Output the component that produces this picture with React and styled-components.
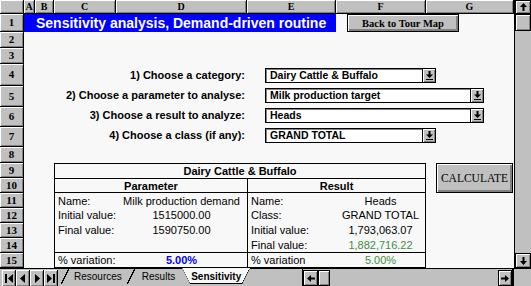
import React from 'react'
import styled, { createGlobalStyle } from 'styled-components'

const GlobalStyle = createGlobalStyle`
  html, body {
    margin: 0;
    padding: 0;
    background: #c0c0c0;
  }
  body {
    width: 531px;
    height: 286px;
    overflow: hidden;
    font-family: "Liberation Sans", Arial, sans-serif;
  }
  * { box-sizing: border-box; }
`

const COLS = [24, 11, 19, 62, 131, 89, 90, 88]
const ROWS = [14, 18, 16, 16, 22, 21, 20, 20, 16, 15, 15, 15, 15, 15, 15, 15]
const LETTERS = ['A', 'B', 'C', 'D', 'E', 'F', 'G']

const GRAY = '#c0c0c0'
const SHEET = '#f8f8f8'
const GREEN = '#3f8f3f'

const Window = styled.div`
  width: 531px;
  height: 286px;
  display: flex;
  flex-direction: column;
  background: ${GRAY};
`

const Top = styled.div`
  display: flex;
  height: 268px;
`

const Sheet = styled.div`
  width: 514px;
  display: grid;
  grid-template-columns: ${COLS.map(c => c + 'px').join(' ')};
  grid-template-rows: ${ROWS.map(r => r + 'px').join(' ')};
  background: ${SHEET};
`

const HeaderCell = styled.div`
  grid-column: ${p => p.$col};
  grid-row: ${p => p.$row};
  background: ${GRAY};
  border-right: 1px solid #000;
  border-bottom: 1px solid #000;
  box-shadow: inset 1px 1px 0 #fff, inset -1px -1px 0 #808080;
  display: flex;
  align-items: center;
  justify-content: center;
  font-family: "Liberation Serif", "Times New Roman", serif;
  font-weight: bold;
  font-size: ${p => (p.$small ? '10px' : '11px')};
  color: #000;
  line-height: 1;
`

const Title = styled.div`
  grid-column: 2 / 7;
  grid-row: 2;
  background: #0000ff;
  color: #fff;
  font-weight: bold;
  font-size: 14px;
  display: flex;
  align-items: center;
  padding-left: 12px;
  white-space: nowrap;
`

const RaisedButton = styled.div`
  grid-column: ${p => p.$col};
  grid-row: ${p => p.$row};
  align-self: start;
  justify-self: start;
  margin-left: ${p => p.$left}px;
  width: ${p => p.$w}px;
  height: ${p => p.$h}px;
  background: ${GRAY};
  border: 1px solid #000;
  box-shadow: inset 1px 1px 0 #fff, inset -2px -2px 0 #808080;
  display: flex;
  align-items: center;
  justify-content: center;
  font-family: "Liberation Serif", "Times New Roman", serif;
  font-weight: ${p => (p.$bold ? 'bold' : 'normal')};
  font-size: ${p => p.$size}px;
  color: #000;
  white-space: nowrap;
`

const Form = styled.div`
  grid-column: 2 / 9;
  grid-row: 5 / 9;
  display: grid;
  grid-template-columns: 221px 1fr;
  column-gap: 20px;
  row-gap: 5px;
  grid-auto-rows: 15px;
  align-content: start;
  padding-top: 4px;
`

const Label = styled.div`
  text-align: right;
  font-weight: bold;
  font-size: 11px;
  line-height: 15px;
  white-space: nowrap;
  color: #000;
`

const Select = styled.div`
  width: ${p => p.$w}px;
  height: 15px;
  display: flex;
  border: 1px solid #000;
  background: #fff;
`

const SelectValue = styled.div`
  flex: 1;
  padding-left: 4px;
  font-weight: bold;
  font-size: 10.5px;
  line-height: 13px;
  box-shadow: inset 1px 1px 0 #808080;
  white-space: nowrap;
  overflow: hidden;
`

const SelectButton = styled.div`
  width: 13px;
  border-left: 1px solid #000;
  background: ${GRAY};
  box-shadow: inset 1px 1px 0 #fff, inset -1px -1px 0 #808080;
  display: flex;
  align-items: center;
  justify-content: center;
`

const Table = styled.div`
  grid-column: 4 / 8;
  grid-row: 10 / 17;
  border: 1px solid #000;
  display: grid;
  grid-template-columns: 61px 131px 89px 89px;
  grid-template-rows: repeat(7, 1fr);
`

const TCell = styled.div`
  grid-column: span ${p => p.$span || 1};
  display: flex;
  align-items: center;
  justify-content: ${p => (p.$center ? 'center' : 'flex-start')};
  padding-left: ${p => (p.$center ? 0 : p.$pad || 3)}px;
  font-size: 11px;
  font-weight: ${p => (p.$bold ? 'bold' : 'normal')};
  color: ${p => p.$color || '#000'};
  white-space: nowrap;
  border-bottom: ${p => (p.$under ? '1px solid #000' : 'none')};
  border-top: ${p => (p.$over ? '1px solid #000' : 'none')};
  border-left: ${p => (p.$divider ? '1px solid #000' : 'none')};
`

const VScroll = styled.div`
  width: 17px;
  display: flex;
  flex-direction: column;
  border-left: 1px solid #000;
  background: ${GRAY};
`

const ScrollBtn = styled.div`
  width: ${p => p.$w || 'auto'};
  height: ${p => p.$h || 'auto'};
  flex: none;
  background: ${GRAY};
  border: 1px solid #000;
  box-shadow: inset 1px 1px 0 #fff, inset -1px -1px 0 #808080;
  display: flex;
  align-items: center;
  justify-content: center;
`

const Track = styled.div`
  flex: 1;
  background: ${GRAY};
`

const BottomBar = styled.div`
  height: 18px;
  display: flex;
  border-top: 1px solid #000;
  background: ${GRAY};
`

const NavGroup = styled.div`
  width: 58px;
  display: flex;
  padding: 1px 0 0 2px;
`

const NavBtn = styled(ScrollBtn)`
  width: 14px;
  height: 16px;
  border-width: 0 1px 0 0;
`

const TabStrip = styled.div`
  width: 244px;
  display: flex;
  align-items: flex-start;
  padding-left: 3px;
`

const Slant = styled.div`
  width: 8px;
  height: 15px;
  flex: none;
  background: linear-gradient(
    ${p => (p.$back ? 'to top right' : 'to bottom right')},
    transparent calc(50% - 0.7px),
    #000 calc(50% - 0.7px),
    #000 calc(50% + 0.7px),
    transparent calc(50% + 0.7px)
  );
`

const TabText = styled.div`
  height: 15px;
  padding: 0 ${p => p.$pad}px;
  font-size: 10px;
  font-weight: ${p => (p.$active ? 'bold' : 'normal')};
  line-height: 15px;
  color: #000;
  white-space: nowrap;
`

const ActiveTab = styled.div`
  display: flex;
  margin-top: -1px;
  height: 16px;
  padding-top: 1px;
  background:
    linear-gradient(#000, #000) bottom / 100% 1px no-repeat,
    ${SHEET};
  clip-path: polygon(0 0, 100% 0, calc(100% - 8px) 100%, 8px 100%);
`

const HScroll = styled.div`
  width: 212px;
  display: flex;
  border-left: 1px solid #000;
  border-right: 2px solid #000;
  padding-top: 1px;
`

const Corner = styled.div`
  flex: 1;
`

const ArrowUp = () => (
  <svg width="7" height="8" viewBox="0 0 7 8">
    <path d="M3.5 0 L7 4 L4.5 4 L4.5 8 L2.5 8 L2.5 4 L0 4 Z" fill="#000" />
  </svg>
)

const ArrowDown = () => (
  <svg width="7" height="8" viewBox="0 0 7 8">
    <path d="M3.5 8 L7 4 L4.5 4 L4.5 0 L2.5 0 L2.5 4 L0 4 Z" fill="#000" />
  </svg>
)

const ArrowLeft = () => (
  <svg width="8" height="7" viewBox="0 0 8 7">
    <path d="M0 3.5 L4 0 L4 2.5 L8 2.5 L8 4.5 L4 4.5 L4 7 Z" fill="#000" />
  </svg>
)

const ArrowRight = () => (
  <svg width="8" height="7" viewBox="0 0 8 7">
    <path d="M8 3.5 L4 0 L4 2.5 L0 2.5 L0 4.5 L4 4.5 L4 7 Z" fill="#000" />
  </svg>
)

const DropArrow = () => (
  <svg width="7" height="9" viewBox="0 0 7 9">
    <path d="M3.5 7 L7 3.5 L4.5 3.5 L4.5 0 L2.5 0 L2.5 3.5 L0 3.5 Z" fill="#000" />
    <rect x="0" y="8" width="7" height="1" fill="#000" />
  </svg>
)

const NavIcon = ({ dir, bar }) => (
  <svg width="8" height="9" viewBox="0 0 8 9">
    {dir === 'left' ? (
      <>
        {bar && <rect x="0" y="0" width="2" height="9" fill="#000" />}
        <path d={bar ? 'M8 0 L8 9 L3 4.5 Z' : 'M6 0 L6 9 L1 4.5 Z'} fill="#000" />
      </>
    ) : (
      <>
        {bar && <rect x="6" y="0" width="2" height="9" fill="#000" />}
        <path d={bar ? 'M0 0 L0 9 L5 4.5 Z' : 'M2 0 L2 9 L7 4.5 Z'} fill="#000" />
      </>
    )}
  </svg>
)

const choices = [
  { label: '1) Choose a category:', value: 'Dairy Cattle & Buffalo', w: 171 },
  { label: '2) Choose a parameter to analyse:', value: 'Milk production target', w: 219 },
  { label: '3) Choose a result to analyze:', value: 'Heads', w: 219 },
  { label: '4) Choose a class (if any):', value: 'GRAND TOTAL', w: 171 },
]

const rows = [
  ['Name:', 'Milk production demand', 'Name:', 'Heads'],
  ['Initial value:', '1515000.00', 'Class:', 'GRAND TOTAL'],
  ['Final value:', '1590750.00', 'Initial value:', '1,793,063.07'],
  ['', '', 'Final value:', '1,882,716.22', GREEN],
]

export default function App() {
  return (
    <>
      <GlobalStyle />
      <Window>
        <Top>
          <Sheet>
            <HeaderCell $col={1} $row={1} />
            {LETTERS.map((l, i) => (
              <HeaderCell key={l} $col={i + 2} $row={1} $small>{l}</HeaderCell>
            ))}
            {ROWS.slice(1).map((_, i) => (
              <HeaderCell key={i} $col={1} $row={i + 2}>{i + 1}</HeaderCell>
            ))}

            <Title>Sensitivity analysis, Demand-driven routine</Title>
            <RaisedButton $col="7 / 9" $row={2} $left={11} $w={112} $h={18} $size={10.5} $bold>
              Back to Tour Map
            </RaisedButton>

            <Form>
              {choices.map(c => (
                <React.Fragment key={c.label}>
                  <Label>{c.label}</Label>
                  <Select $w={c.w}>
                    <SelectValue>{c.value}</SelectValue>
                    <SelectButton><DropArrow /></SelectButton>
                  </Select>
                </React.Fragment>
              ))}
            </Form>

            <Table>
              <TCell $span={4} $center $bold $under>Dairy Cattle &amp; Buffalo</TCell>
              <TCell $span={2} $center $bold $under>Parameter</TCell>
              <TCell $span={2} $center $bold $under $divider>Result</TCell>
              {rows.map((r, i) => (
                <React.Fragment key={i}>
                  <TCell>{r[0]}</TCell>
                  <TCell $center>{r[1]}</TCell>
                  <TCell $divider>{r[2]}</TCell>
                  <TCell $center $color={r[4]}>{r[3]}</TCell>
                </React.Fragment>
              ))}
              <TCell $over>% variation:</TCell>
              <TCell $over $center $bold $color="#0000ff">5.00%</TCell>
              <TCell $over $divider>% variation</TCell>
              <TCell $over $center $color={GREEN}>5.00%</TCell>
            </Table>

            <RaisedButton $col={8} $row="10 / 12" $left={10} $w={77} $h={30} $size={11.5}>
              CALCULATE
            </RaisedButton>
          </Sheet>
          <VScroll>
            <ScrollBtn $h="14px"><ArrowUp /></ScrollBtn>
            <ScrollBtn $h="17px" />
            <Track />
            <ScrollBtn $h="15px"><ArrowDown /></ScrollBtn>
          </VScroll>
        </Top>
        <BottomBar>
          <NavGroup>
            <NavBtn><NavIcon dir="left" bar /></NavBtn>
            <NavBtn><NavIcon dir="left" /></NavBtn>
            <NavBtn><NavIcon dir="right" /></NavBtn>
            <NavBtn><NavIcon dir="right" bar /></NavBtn>
          </NavGroup>
          <TabStrip>
            <Slant />
            <TabText $pad={5}>Resources</TabText>
            <Slant />
            <TabText $pad={7}>Results</TabText>
            <ActiveTab>
              <Slant $back />
              <TabText $pad={1} $active>Sensitivity</TabText>
              <Slant />
            </ActiveTab>
          </TabStrip>
          <HScroll>
            <ScrollBtn $w="15px" $h="16px"><ArrowLeft /></ScrollBtn>
            <ScrollBtn $w="12px" $h="16px" />
            <Track />
            <ScrollBtn $w="14px" $h="16px"><ArrowRight /></ScrollBtn>
          </HScroll>
          <Corner />
        </BottomBar>
      </Window>
    </>
  )
}
